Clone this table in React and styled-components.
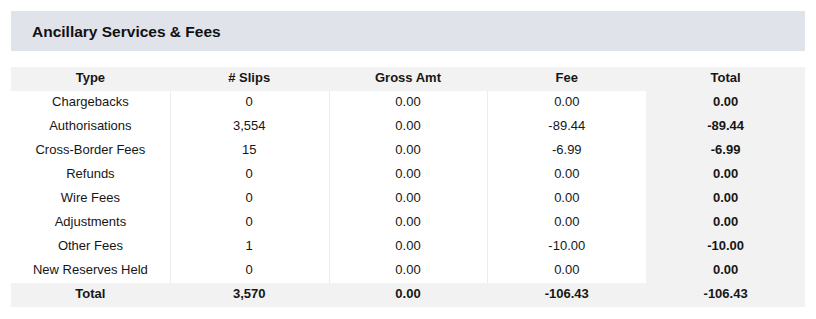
import React from "react";
import styled, { createGlobalStyle } from "styled-components";

const Global = createGlobalStyle`
  html, body { margin: 0; padding: 0; background: #ffffff; }
  body { font-family: "Liberation Sans", Arial, sans-serif; color: #111; }
`;

const Page = styled.div`
  padding: 11px 11px 0 11px;
  width: 794px;
`;

const TitleBar = styled.div`
  background: #e0e3ea;
  height: 40px;
  display: flex;
  align-items: center;
  padding-left: 21px;
  padding-top: 1px;
  box-sizing: border-box;
`;

const Title = styled.h2`
  margin: 0;
  font-size: 15.5px;
  font-weight: 700;
  color: #111;
`;

const Table = styled.div`
  margin-top: 16px;
  display: grid;
  grid-template-columns: repeat(5, 1fr);
`;

const Cell = styled.div`
  height: 24px;
  box-sizing: border-box;
  padding-bottom: 4px;
  display: flex;
  align-items: center;
  justify-content: center;
  font-size: 13px;
  font-weight: ${(p) => (p.$bold ? 700 : 400)};
  background: ${(p) => (p.$shade ? "#f2f2f2" : "#ffffff")};
  box-shadow: ${(p) => (p.$divider ? "inset 1px 0 0 #ececec" : "none")};
  color: #161616;
  white-space: nowrap;
`;

const headers = ["Type", "# Slips", "Gross Amt", "Fee", "Total"];

const rows = [
  ["Chargebacks", "0", "0.00", "0.00", "0.00"],
  ["Authorisations", "3,554", "0.00", "-89.44", "-89.44"],
  ["Cross-Border Fees", "15", "0.00", "-6.99", "-6.99"],
  ["Refunds", "0", "0.00", "0.00", "0.00"],
  ["Wire Fees", "0", "0.00", "0.00", "0.00"],
  ["Adjustments", "0", "0.00", "0.00", "0.00"],
  ["Other Fees", "1", "0.00", "-10.00", "-10.00"],
  ["New Reserves Held", "0", "0.00", "0.00", "0.00"],
];

const totals = ["Total", "3,570", "0.00", "-106.43", "-106.43"];

export default function App() {
  return (
    <>
      <Global />
      <Page>
        <TitleBar>
          <Title>Ancillary Services &amp; Fees</Title>
        </TitleBar>
        <Table>
          {headers.map((h) => (
            <Cell key={h} $bold $shade>
              {h}
            </Cell>
          ))}
          {rows.map((r, ri) =>
            r.map((v, ci) => (
              <Cell
                key={`${ri}-${ci}`}
                $bold={ci === 4}
                $shade={ci === 4}
                $divider={ci >= 1 && ci <= 3}
              >
                {v}
              </Cell>
            ))
          )}
          {totals.map((t, i) => (
            <Cell key={`t${i}`} $bold $shade>
              {t}
            </Cell>
          ))}
        </Table>
      </Page>
    </>
  );
}
